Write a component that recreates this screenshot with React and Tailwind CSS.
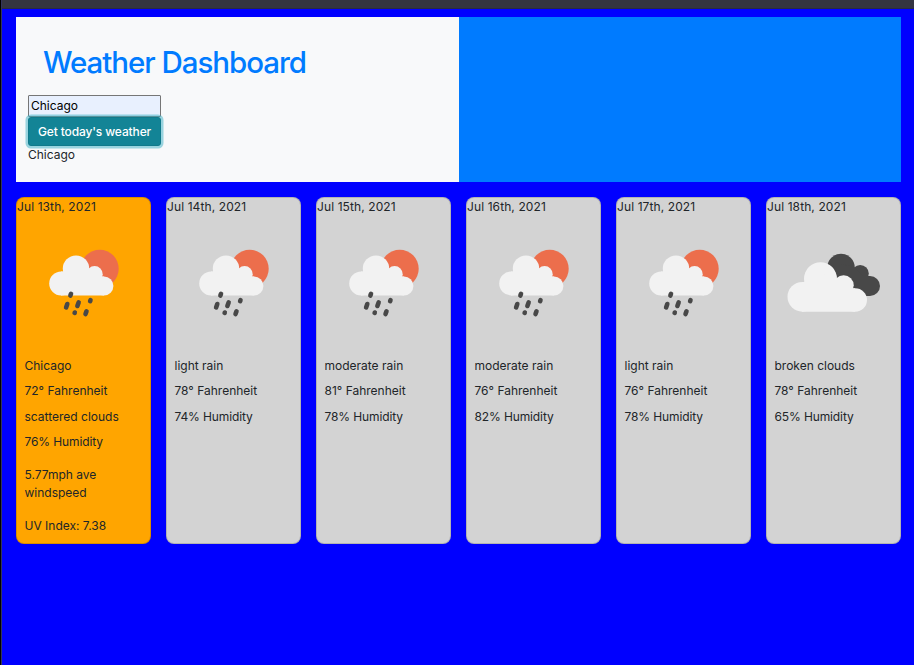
const days = [
  { date: "Jul 13th, 2021", icon: "rain", lines: ["Chicago", "72° Fahrenheit", "scattered clouds", "76% Humidity"], extra: ["5.77mph ave windspeed", "UV Index: 7.38"] },
  { date: "Jul 14th, 2021", icon: "rain", lines: ["light rain", "78° Fahrenheit", "74% Humidity"] },
  { date: "Jul 15th, 2021", icon: "rain", lines: ["moderate rain", "81° Fahrenheit", "78% Humidity"] },
  { date: "Jul 16th, 2021", icon: "rain", lines: ["moderate rain", "76° Fahrenheit", "82% Humidity"] },
  { date: "Jul 17th, 2021", icon: "rain", lines: ["light rain", "76° Fahrenheit", "78% Humidity"] },
  { date: "Jul 18th, 2021", icon: "clouds", lines: ["broken clouds", "78° Fahrenheit", "65% Humidity"] },
];

const drops = [
  [53.7, 78.7, 0.9],
  [49.7, 89.7, 1.7],
  [61, 88.2, 1.8],
  [73.3, 84.7, 0.5],
  [57.7, 96.7, 0.2],
  [69, 96.7, 1.4],
];

function RainIcon() {
  return (
    <svg className="block h-[133px] w-[133px]" viewBox="0 0 133 133">
      <circle cx="82.7" cy="52.7" r="19" fill="#ec6e4c" />
      <g fill="#f2f2f2">
        <circle cx="44.2" cy="67.4" r="12" />
        <circle cx="59" cy="52.6" r="13.2" />
        <circle cx="77.6" cy="58.2" r="8.1" />
        <circle cx="87" cy="70" r="9.4" />
        <path d="M44 55.4H46L60 48L71 52L80 60L87 60.6V79.4H44Z" />
      </g>
      <g stroke="#484848" strokeWidth="4.6" strokeLinecap="round">
        {drops.map(([x, y, h]) => (
          <line key={x} x1={x + h * 0.35} y1={y - h} x2={x - h * 0.35} y2={y + h} />
        ))}
      </g>
    </svg>
  );
}

function CloudsIcon() {
  return (
    <svg className="block h-[133px] w-[133px]" viewBox="0 0 133 133">
      <g fill="#484848">
        <circle cx="74" cy="51.5" r="13.7" />
        <circle cx="93.2" cy="57.6" r="8.6" />
        <circle cx="103" cy="70" r="10" />
        <path d="M74 48L87 51L96 60L103 60V80H74Z" />
      </g>
      <g fill="#f2f2f2">
        <circle cx="35.4" cy="80.8" r="14.9" />
        <circle cx="53.5" cy="62.7" r="16.5" />
        <circle cx="76.6" cy="69.3" r="10.1" />
        <circle cx="88.2" cy="84" r="11.8" />
        <path d="M35 65.9H37L54 58L69 62L80 72.2H88V95.7H35Z" />
      </g>
    </svg>
  );
}

function DayCard({ day, today }) {
  return (
    <div
      className={`min-w-0 rounded-[8px] border border-black/15 ${today ? "bg-[#ffa500]" : "bg-[#d3d3d3]"}`}
    >
      <div className="h-[18px] tracking-[0.1px] whitespace-nowrap">{day.date}</div>
      {day.icon === "rain" ? <RainIcon /> : <CloudsIcon />}
      <div className="flex flex-col gap-[7.4px] pt-[8px] pl-[7.5px]">
        {day.lines.map((line) => (
          <p key={line} className={line.endsWith("Humidity") ? "tracking-[-0.12px]" : ""}>
            {line}
          </p>
        ))}
      </div>
      {day.extra && (
        <div className="flex flex-col gap-[15px] px-[7.5px] pt-[15px]">
          {day.extra.map((line) => (
            <p key={line}>{line}</p>
          ))}
        </div>
      )}
    </div>
  );
}

export default function App() {
  return (
    <div className="h-[665px] w-[914px] overflow-hidden border-l border-black">
      <div className="flex h-full flex-col border-l border-[#34355a] bg-[#0000ff] font-['Inter',sans-serif] text-[12px] leading-[18px] text-[#212529]">
        <div className="h-[9px] shrink-0 border-b border-[#292b45] bg-[#343541]" />
        <header className="mt-[8px] ml-[14px] flex h-[165px] w-[885px] shrink-0">
          <div className="flex w-[443px] flex-col items-start bg-[#f8f9fa] pl-[12px]">
            <h1 className="mt-[27px] ml-[15px] h-[36px] text-[29.5px] leading-[36px] font-[530] tracking-[-1.05px] whitespace-nowrap text-[#007bff]">
              Weather Dashboard
            </h1>
            <input
              className="mt-[15px] h-[22px] w-[133px] rounded-[1px] border border-[#767676] bg-[#e8f0fe] px-[2px] pb-[2px] text-[12px] text-black outline-none"
              defaultValue="Chicago"
            />
            <button className="relative h-[29px] w-[133px] rounded-[3px] border border-[#117a8b] bg-[#138496] text-[12px] font-medium tracking-[-0.13px] whitespace-nowrap text-white shadow-[0_0_0_2.5px_rgba(58,176,195,0.5)]">
              Get today's weather
            </button>
            <div>Chicago</div>
          </div>
          <div className="flex-1 bg-[#007bff]" />
        </header>
        <main className="mt-[15px] ml-[14px] grid h-[347px] w-[885px] shrink-0 grid-cols-6 gap-[15px]">
          {days.map((day, i) => (
            <DayCard key={day.date} day={day} today={i === 0} />
          ))}
        </main>
      </div>
    </div>
  );
}
